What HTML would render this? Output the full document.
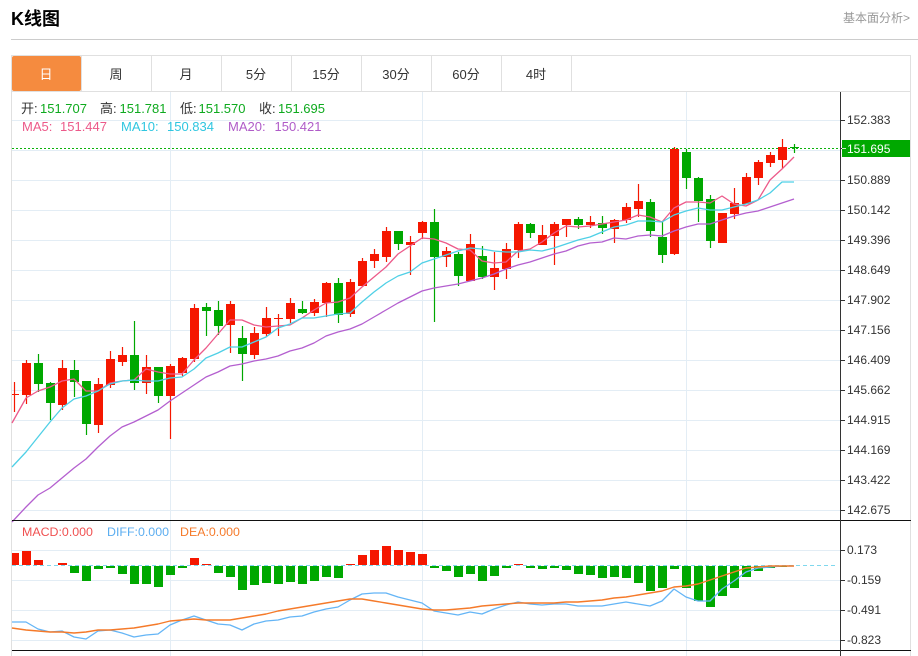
<!DOCTYPE html>
<html><head><meta charset="utf-8"><style>
html,body{margin:0;padding:0;background:#fff;width:918px;height:656px;overflow:hidden}
svg{position:absolute;left:0;top:0;display:block}
text{font-family:"Liberation Sans","Noto Sans CJK SC",sans-serif;white-space:pre}
</style></head><body>
<svg width="918" height="656" viewBox="0 0 918 656" xmlns="http://www.w3.org/2000/svg">
<text x="11" y="25" font-size="18" font-weight="bold" fill="#000">K线图</text>
<text x="843" y="22" font-size="12" fill="#999">基本面分析&gt;</text>
<path d="M11 39.5H918" stroke="#ccc" fill="none"/>
<path d="M11.5 55V656M910.5 55V656M11 55.5H911M11 91.5H911M81.5 56V91M151.5 56V91M221.5 56V91M291.5 56V91M361.5 56V91M431.5 56V91M501.5 56V91M571.5 56V91" stroke="#e0e0e0" fill="none"/>
<rect x="12" y="56" width="69" height="35" rx="2" fill="#f58b3f"/>
<g font-size="13" fill="#333" text-anchor="middle">
<text x="46" y="79" fill="#fff">日</text><text x="116" y="79">周</text><text x="186" y="79">月</text><text x="256" y="79">5分</text><text x="326" y="79">15分</text><text x="396" y="79">30分</text><text x="466" y="79">60分</text><text x="536" y="79">4时</text>
</g>
<path d="M12 120.5H840M12 150.5H840M12 180.5H840M12 210.5H840M12 240.5H840M12 270.5H840M12 300.5H840M12 330.5H840M12 360.5H840M12 390.5H840M12 420.5H840M12 450.5H840M12 480.5H840M12 510.5H840M12 550.5H840M12 580.5H840M12 610.5H840M12 640.5H840M170.5 92V656M422.5 92V656M686.5 92V656" stroke="#e3edf5" fill="none"/>
<path d="M12 148.5H840" stroke="#0ab30a" stroke-dasharray="2 2" fill="none"/>
<path fill="none" stroke="#f51700" stroke-width="1.2" d="M14.5 382V412M26.5 360V404M62.5 360V410M98.5 378V433M110.5 351V388M122.5 347V366M146.5 355V394M170.5 364V439M182.5 357V376M194.5 304V362M230.5 301V353M254.5 327V359M266.5 307V337M278.5 314V336M290.5 298V323M314.5 299V316M326.5 282V317M350.5 279V317M362.5 258V287M374.5 249V268M386.5 227V262M410.5 236V275M422.5 221V239M446.5 247V267M470.5 234V281M494.5 252V290M506.5 243V279M518.5 222V258M542.5 225V245M554.5 222V265M566.5 219V237M590.5 216V228M614.5 219V243M626.5 203V223M638.5 184V217M674.5 147V255M722.5 213V243M734.5 188V219M746.5 173V204M758.5 160V185M770.5 152V167M782.5 139V168"/>
<path fill="#f51700" d="M12 394h7v1h-7zM22 363h9v32h-9zM58 368h9v37h-9zM94 384h9v41h-9zM106 359h9v26h-9zM118 355h9v7h-9zM142 367h9v16h-9zM166 366h9v30h-9zM178 358h9v15h-9zM190 308h9v51h-9zM226 304h9v21h-9zM250 333h9v22h-9zM262 318h9v16h-9zM274 318h9v1h-9zM286 303h9v16h-9zM310 302h9v11h-9zM322 283h9v20h-9zM346 282h9v32h-9zM358 261h9v25h-9zM370 254h9v7h-9zM382 231h9v26h-9zM406 242h9v3h-9zM418 222h9v11h-9zM442 251h9v6h-9zM466 244h9v37h-9zM490 268h9v9h-9zM502 249h9v20h-9zM514 224h9v26h-9zM538 235h9v10h-9zM550 224h9v12h-9zM562 219h9v6h-9zM586 222h9v3h-9zM610 220h9v9h-9zM622 207h9v13h-9zM634 201h9v8h-9zM670 149h9v105h-9zM718 213h9v30h-9zM730 203h9v11h-9zM742 177h9v27h-9zM754 162h9v16h-9zM766 155h9v8h-9zM778 147h9v13h-9z"/>
<path fill="none" stroke="#00a800" stroke-width="1.2" d="M38.5 354V392M50.5 382V420M74.5 360V397M86.5 381V435M134.5 321V390M158.5 367V403M206.5 303V336M218.5 301V335M242.5 326V381M302.5 301V314M338.5 278V323M398.5 231V250M434.5 209V322M458.5 252V286M482.5 246V279M530.5 223V238M578.5 217V229M602.5 216V234M650.5 199V237M662.5 222V263M686.5 149V189M698.5 177V222M710.5 195V248M794.5 144V153"/>
<path fill="#00a800" d="M34 363h9v21h-9zM46 383h9v20h-9zM70 370h9v12h-9zM82 381h9v43h-9zM130 355h9v28h-9zM154 367h9v29h-9zM202 307h9v4h-9zM214 310h9v16h-9zM238 338h9v16h-9zM298 309h9v4h-9zM334 283h9v32h-9zM394 231h9v13h-9zM430 222h9v35h-9zM454 254h9v22h-9zM478 256h9v21h-9zM526 224h9v9h-9zM574 219h9v6h-9zM598 223h9v5h-9zM646 202h9v29h-9zM658 237h9v18h-9zM682 152h9v26h-9zM694 178h9v23h-9zM706 199h9v42h-9zM790 147h9v1h-9z"/>
<g fill="none" stroke-linejoin="round" stroke-width="1.3">
<path stroke="#ec5a8a" d="M12 423L26 398L38 391L50 387L62 381L74 379L86 391L98 391L110 383L122 381L134 380L146 369L158 372L170 374L182 374L194 360L206 348L218 334L230 320L242 320L254 325L266 327L278 326L290 325L302 318L314 310L326 303L338 302L350 298L362 287L374 277L386 267L398 254L410 246L422 238L434 239L446 243L458 249L470 250L482 261L494 263L506 262L518 251L530 249L542 242L554 233L566 226L578 227L590 226L602 224L614 222L626 220L638 215L650 217L662 222L674 208L686 202L698 202L710 203L722 196L734 204L746 206L758 200L770 180L782 169L794 157"/>
<path stroke="#4fd0e6" d="M12 467L26 452L38 437L50 422L62 408L74 399L86 396L98 391L110 384L122 381L134 380L146 381L158 381L170 378L182 377L194 369L206 358L218 353L230 347L242 347L254 342L266 337L278 328L290 324L302 318L314 318L326 316L338 314L350 313L362 302L374 292L386 283L398 276L410 272L422 263L434 259L446 255L458 251L470 248L482 249L494 251L506 252L518 252L530 250L542 251L554 248L566 244L578 240L590 237L602 232L614 227L626 225L638 221L650 221L662 222L674 215L686 211L698 208L710 210L722 210L734 207L746 204L758 200L770 193L782 182L794 182"/>
<path stroke="#b45fcf" d="M12 522L26 507L38 495L50 488L62 478L74 468L86 459L98 447L110 436L122 427L134 422L146 416L158 410L170 401L182 393L194 385L206 377L218 372L230 366L242 364L254 361L266 359L278 356L290 351L302 348L314 343L326 336L338 332L350 329L362 324L374 317L386 310L398 303L410 297L422 291L434 288L446 286L458 284L470 281L482 278L494 274L506 269L518 265L530 262L542 258L554 254L566 251L578 246L590 243L602 242L614 238L626 239L638 236L650 235L662 236L674 231L686 227L698 224L710 224L722 220L734 216L746 213L758 211L770 207L782 203L794 199"/>
</g>
<path d="M12 565.5H838" stroke="#7fd8ee" stroke-dasharray="4 3" fill="none"/>
<path fill="#f51700" d="M12 553h7v12h-7zM22 551h9v14h-9zM34 560h9v5h-9zM58 563h9v2h-9zM190 558h9v7h-9zM202 564h9v1h-9zM346 564h9v1h-9zM358 555h9v10h-9zM370 550h9v15h-9zM382 546h9v19h-9zM394 550h9v15h-9zM406 552h9v13h-9zM418 554h9v11h-9zM514 564h9v1h-9z"/>
<path fill="#00a800" d="M70 566h9v7h-9zM82 566h9v15h-9zM94 566h9v3h-9zM106 566h9v2h-9zM118 566h9v8h-9zM130 566h9v18h-9zM142 566h9v18h-9zM154 566h9v21h-9zM166 566h9v9h-9zM178 566h9v2h-9zM214 566h9v7h-9zM226 566h9v11h-9zM238 566h9v24h-9zM250 566h9v19h-9zM262 566h9v17h-9zM274 566h9v18h-9zM286 566h9v16h-9zM298 566h9v18h-9zM310 566h9v15h-9zM322 566h9v11h-9zM334 566h9v12h-9zM430 566h9v2h-9zM442 566h9v5h-9zM454 566h9v11h-9zM466 566h9v8h-9zM478 566h9v15h-9zM490 566h9v10h-9zM502 566h9v2h-9zM526 566h9v2h-9zM538 566h9v3h-9zM550 566h9v2h-9zM562 566h9v4h-9zM574 566h9v8h-9zM586 566h9v9h-9zM598 566h9v12h-9zM610 566h9v11h-9zM622 566h9v12h-9zM634 566h9v17h-9zM646 566h9v25h-9zM658 566h9v22h-9zM670 566h9v3h-9zM682 566h9v22h-9zM694 566h9v35h-9zM706 566h9v41h-9zM718 566h9v30h-9zM730 566h9v22h-9zM742 566h9v11h-9zM754 566h9v5h-9zM766 566h9v2h-9zM778 566h9v1h-9z"/>
<g fill="none" stroke-linejoin="round" stroke-width="1.3">
<path stroke="#64b5f6" d="M12 622L26 622L38 629L50 632L62 631L74 637L86 639L98 631L110 630L122 633L134 637L146 635L158 634L170 625L182 620L194 616L206 620L218 624L230 625L242 630L254 624L266 621L278 620L290 617L302 616L314 612L326 609L338 607L350 600L362 594L374 593L386 593L398 597L410 600L422 603L434 611L446 613L458 615L470 612L482 614L494 609L506 605L518 602L530 604L542 605L554 604L566 604L578 606L590 606L602 606L614 604L626 602L638 604L650 606L662 601L674 589L686 597L698 601L710 601L722 589L734 581L746 572L758 568L770 567L782 566L794 566"/>
<path stroke="#f57a2a" stroke-width="1.4" d="M12 628L26 630L38 631L50 632L62 632L74 633L86 632L98 630L110 630L122 629L134 628L146 626L158 624L170 621L182 620L194 619L206 620L218 620L230 620L242 618L254 616L266 614L278 611L290 609L302 607L314 605L326 603L338 601L350 599L362 599L374 601L386 603L398 605L410 607L422 609L434 610L446 610L458 609L470 608L482 606L494 605L506 604L518 603L530 603L542 603L554 603L566 602L578 602L590 601L602 600L614 598L626 597L638 595L650 593L662 591L674 587L686 586L698 584L710 580L722 576L734 572L746 568L758 567L770 566L782 566L794 566"/>
</g>
<path d="M12 520.5H911M12 650.5H911" stroke="#111" fill="none"/>
<path d="M840.5 92V656" stroke="#333" fill="none"/>
<path d="M841 120.5h4M841 148.5h4M841 180.5h4M841 210.5h4M841 240.5h4M841 270.5h4M841 300.5h4M841 330.5h4M841 360.5h4M841 390.5h4M841 420.5h4M841 450.5h4M841 480.5h4M841 510.5h4M841 550.5h4M841 580.5h4M841 610.5h4M841 640.5h4" stroke="#333" fill="none"/>
<rect x="842" y="140" width="68" height="17" fill="#00a800"/>
<path d="M842 148.5h4" stroke="#cfeecf" fill="none"/>
<text x="847" y="153" font-size="12" fill="#fff">151.695</text>
<g font-size="12" fill="#333">
<text x="847" y="124">152.383</text><text x="847" y="184">150.889</text><text x="847" y="214">150.142</text><text x="847" y="244">149.396</text><text x="847" y="274">148.649</text><text x="847" y="304">147.902</text><text x="847" y="334">147.156</text><text x="847" y="364">146.409</text><text x="847" y="394">145.662</text><text x="847" y="424">144.915</text><text x="847" y="454">144.169</text><text x="847" y="484">143.422</text><text x="847" y="514">142.675</text>
<text x="847" y="554">0.173</text><text x="847" y="584">-0.159</text><text x="847" y="614">-0.491</text><text x="847" y="644">-0.823</text>
</g>
<g font-size="13">
<text x="21" y="113" fill="#333">开:</text><text x="40" y="113" fill="#0eaa1e">151.707</text>
<text x="100" y="113" fill="#333">高:</text><text x="119.5" y="113" fill="#0eaa1e">151.781</text>
<text x="180" y="113" fill="#333">低:</text><text x="198.5" y="113" fill="#0eaa1e">151.570</text>
<text x="259" y="113" fill="#333">收:</text><text x="278" y="113" fill="#0eaa1e">151.695</text>
<text x="22" y="131" fill="#ec5a8a">MA5:</text><text x="60" y="131" fill="#ec5a8a">151.447</text>
<text x="121" y="131" fill="#2fc6e0">MA10:</text><text x="167" y="131" fill="#2fc6e0">150.834</text>
<text x="228" y="131" fill="#b05cc8">MA20:</text><text x="274.5" y="131" fill="#b05cc8">150.421</text>
</g>
<g font-size="12.4">
<text x="22" y="536" fill="#f05050">MACD:0.000</text>
<text x="107" y="536" fill="#5badf0">DIFF:0.000</text>
<text x="180" y="536" fill="#f57a2a">DEA:0.000</text>
</g>
</svg>
</body></html>
